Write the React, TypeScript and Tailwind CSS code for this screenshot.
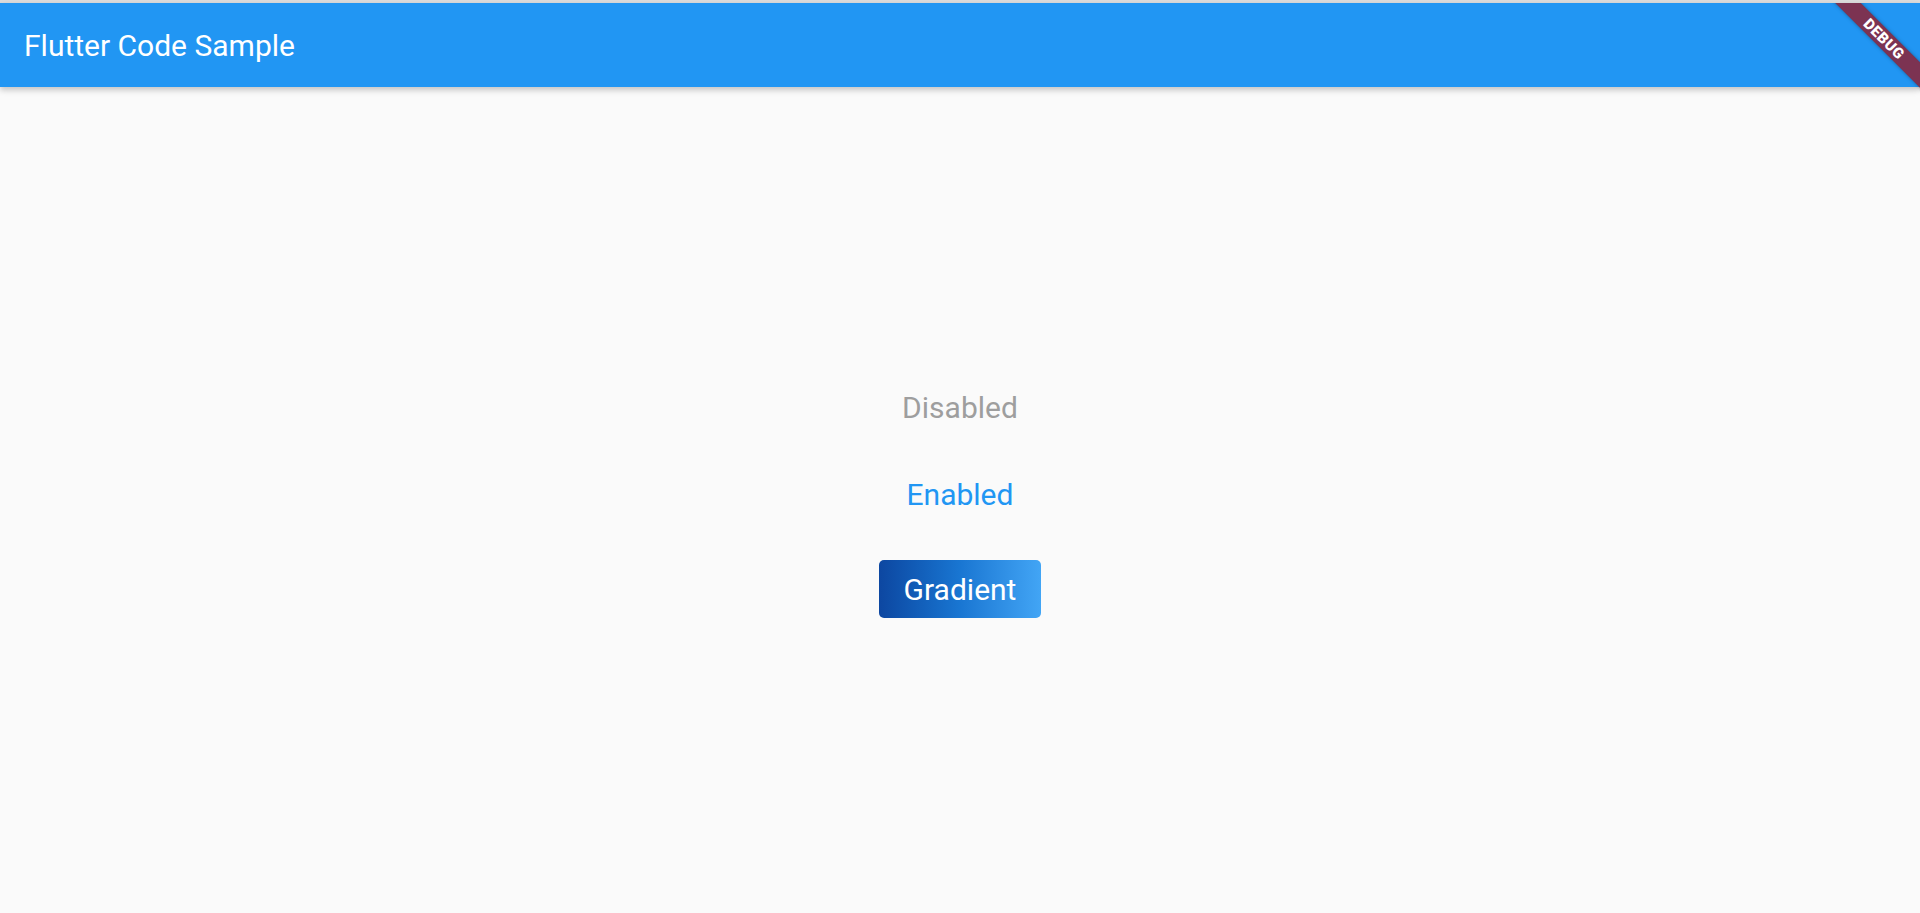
export default function App() {
  return (
    <div
      className="relative flex h-[913px] w-full flex-col overflow-hidden bg-[#fafafa]"
      style={{ fontFamily: "Roboto, 'Noto Sans', sans-serif" }}
    >
      <div className="h-[3px] w-full bg-[#dcdcdc]" />
      <header className="relative z-10 flex h-[84px] items-center bg-[#2196f3] px-[24px] shadow-[0_3px_6px_rgba(0,0,0,0.22)]">
        <h1 className="text-[30px] font-normal leading-[35px] text-white">Flutter Code Sample</h1>
      </header>
      <main className="flex flex-1 flex-col items-center pt-[303px]">
        <span className="text-[30px] leading-[35px] text-[#9e9e9e]">Disabled</span>
        <span className="mt-[52px] text-[30px] leading-[35px] text-[#2196f3]">Enabled</span>
        <button className="mt-[48px] flex h-[58px] items-center rounded-[5px] bg-gradient-to-r from-[#0d47a1] via-[#1976d2] to-[#42a5f5] px-[25px] pt-[1px] text-[30px] leading-[35px] text-white">
          Gradient
        </button>
      </main>
      <div className="pointer-events-none absolute right-0 top-[3px] z-20 h-[90px] w-[90px] overflow-hidden">
        <div className="absolute left-[-31px] top-[27px] flex h-[18px] w-[170px] rotate-45 items-center justify-center bg-[#7c3352] shadow-[0_0_4px_rgba(0,0,0,0.35)]">
          <span className="text-[15px] font-black leading-none tracking-[0.5px] text-white">DEBUG</span>
        </div>
      </div>
    </div>
  );
}
